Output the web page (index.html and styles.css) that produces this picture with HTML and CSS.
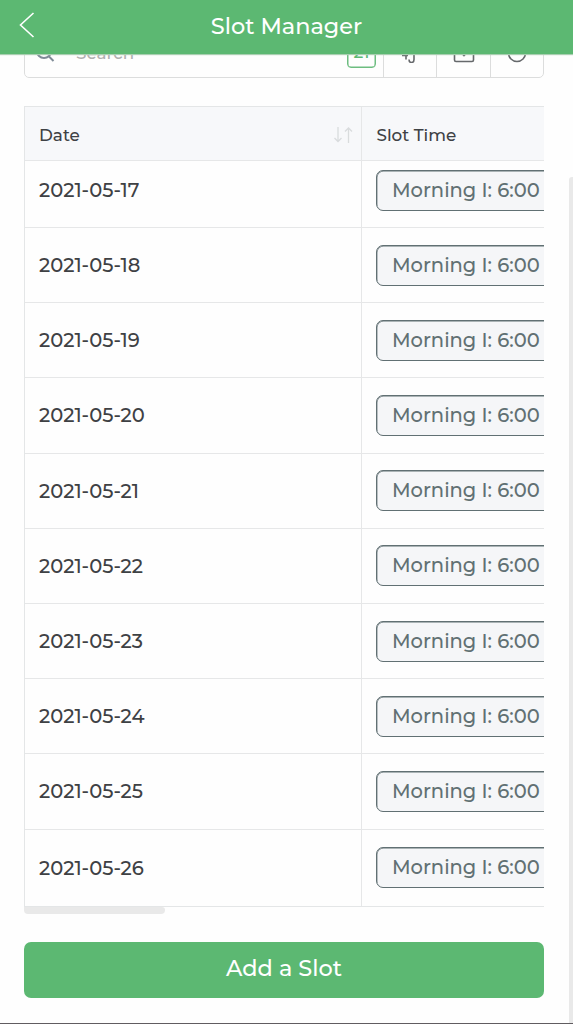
FILE: index.html
```html
<!DOCTYPE html>
<html lang="en">
<head>
<meta charset="utf-8">
<title>Slot Manager</title>
<link rel="stylesheet" href="styles.css">
<script src="rows.js" defer></script>
</head>
<body>
<header class="topbar">
  <svg class="back" width="16" height="28" viewBox="0 0 16 28"><path d="M14.500 2 1.500 14l13 12" /></svg>
  <h1 class="title">Slot Manager</h1>
</header>
<main class="page">
  <section class="toolbar-view">
    <div class="toolbar">
      <div class="search">
        <svg class="search-icon" width="20" height="20" viewBox="0 0 20 20"><circle cx="8" cy="8" r="7"/><path d="m12.500 13 5 5"/></svg>
        <span class="placeholder">Search</span>
        <span class="count">21</span>
      </div>
      <div class="tool"><svg class="tool-icon" width="22" height="24" viewBox="0 0 22 24"><path d="M3 4h15M3 16.500h6M7 13v7.500M10 20.500q0 3 2.500 3t2.500-3v-12"/></svg></div>
      <div class="tool"><svg class="tool-icon" width="22" height="24" viewBox="0 0 22 24"><path d="M1.500 14v7q0 1.500 1.500 1.500h16q1.500 0 1.500-1.500v-7M11 2v14M6.500 12l4.500 4.500 4.500-4.500"/></svg></div>
      <div class="tool"><svg class="tool-icon" width="22" height="24" viewBox="0 0 22 24"><circle cx="11" cy="14" r="8.500"/></svg></div>
    </div>
  </section>
  <section class="grid">
    <div class="row head">
      <div class="cell date-cell"><span>Date</span>
        <svg class="sort" width="20" height="16" viewBox="0 0 20 16"><path d="M5 0v14.500M1.500 11 5 14.500 8.500 11M15.500 16V1M12 4.500 15.500 1 19 4.500"/></svg>
      </div>
      <div class="cell">Slot Time</div>
    </div>
    <div class="rows" id="rows"></div>
  </section>
  <div class="hscroll"></div>
  <button class="add">Add a Slot</button>
  <div class="vscroll"></div>
</main>
</body>
</html>
```

FILE: rows.js
```js
const rows = document.getElementById('rows');
for (let day = 17; day <= 26; day++) {
  const row = document.createElement('div');
  row.className = 'row';
  row.innerHTML = `<div class="cell date-cell"><span class="date">2021-05-${day}</span></div>` +
    '<div class="cell"><span class="chip">Morning I: 6:00</span></div>';
  rows.append(row);
}
```

FILE: styles.css
```css
* { box-sizing: border-box; }
body {
  margin: 0;
  height: 1024px;
  overflow: hidden;
  display: flex;
  flex-direction: column;
  background: #fefefe;
  border-bottom: 1px solid #605c60;
  font-family: Montserrat, Inter, sans-serif;
  font-weight: 500;
  color: #3e4144;
}
.topbar {
  flex: none;
  height: 54px;
  display: grid;
  grid-template-columns: 40px 1fr 40px;
  align-items: center;
  padding-bottom: 3px;
  background: #5cb872;
  box-shadow: 0 1px 1px #a9cfb1;
  position: relative;
  z-index: 1;
}
.back { margin: -2px 0 0 19px; fill: none; stroke: #fff; stroke-width: 1.600; }
.title { margin: 0; text-align: center; color: #fff; font-size: 22.400px; font-weight: 500; line-height: 50px; }
.page { flex: 1; position: relative; padding: 0 29px 0 24px; }
.toolbar-view { height: 24px; display: flex; align-items: flex-end; overflow: hidden; }
.toolbar {
  flex: 1;
  height: 54px;
  display: flex;
  border: 1px solid #dcdddd;
  border-radius: 5px;
}
.search { flex: 1; display: flex; align-items: center; padding: 0 7px 0 11px; }
.search-icon { margin-top: 4px; fill: none; stroke: #7f8b97; stroke-width: 2; }
.placeholder { margin: 3px 0 0 20px; font-size: 16.800px; color: #b0b0b0; }
.count {
  width: 29px;
  height: 32px;
  margin-left: auto;
  margin-top: 2px;
  border: 1.500px solid #6dbd80;
  border-radius: 4px;
  box-shadow: inset 0 0 0 0.500px #6dbd80;
  color: #5cb872;
  font-size: 17px;
  line-height: 31px;
  text-align: center;
}
.tool { width: 53.300px; display: flex; align-items: center; justify-content: center; border-left: 1px solid #dcdddd; }
.tool-icon { fill: none; stroke: #66696c; stroke-width: 1.600; }
.grid { margin-top: 28px; height: 801px; overflow: hidden; border: 1px solid #e4e6e7; border-right: 0; }
.row { display: grid; grid-template-columns: 337px 1fr; height: 75.200px; border-bottom: 1px solid #e6e7e8; }
.rows .row:first-child { height: 67px; padding-bottom: 8px; }
.rows .row:first-child .date-cell { margin-bottom: -8px; padding-bottom: 8px; }
.rows .row:last-child { height: 77px; }
.head { height: 54px; padding-top: 2px; background: #f7f8fa; font-size: 16.800px; }
.head .date-cell { margin-top: -2px; padding-top: 2px; }
.cell { display: flex; align-items: center; padding-left: 14.500px; min-width: 0; overflow: hidden; }
.date-cell { justify-content: space-between; padding-left: 14px; border-right: 1px solid #e6e7e8; }
.sort { margin-right: 8px; fill: none; stroke: #d9dcdd; stroke-width: 1.300; }
.date { font-size: 19.500px; }
.rows .cell:last-child { padding-left: 14px; }
.chip {
  flex: none;
  width: 180px;
  height: 41px;
  border: 1.500px solid #617073;
  border-radius: 7px;
  box-shadow: inset 0.400px 0.400px 0 #617073;
  padding-left: 15px;
  background: #f5f6f8;
  color: #617073;
  font-size: 19.500px;
  line-height: 38px;
  white-space: nowrap;
}
.hscroll { width: 141px; height: 7px; border-radius: 0 3px 4px 4px; background: #e9e9e9; }
.add {
  display: block;
  width: 520px;
  height: 56px;
  margin-top: 28px;
  padding: 0 0 5px;
  border: 0;
  border-radius: 7px;
  background: #5cb872;
  color: #fff;
  font: inherit;
  font-size: 22.400px;
}
.vscroll { position: absolute; top: 123px; right: 0; bottom: 0; width: 4px; border-radius: 3px 0 0 0; background: #e9e9e9; }
```
